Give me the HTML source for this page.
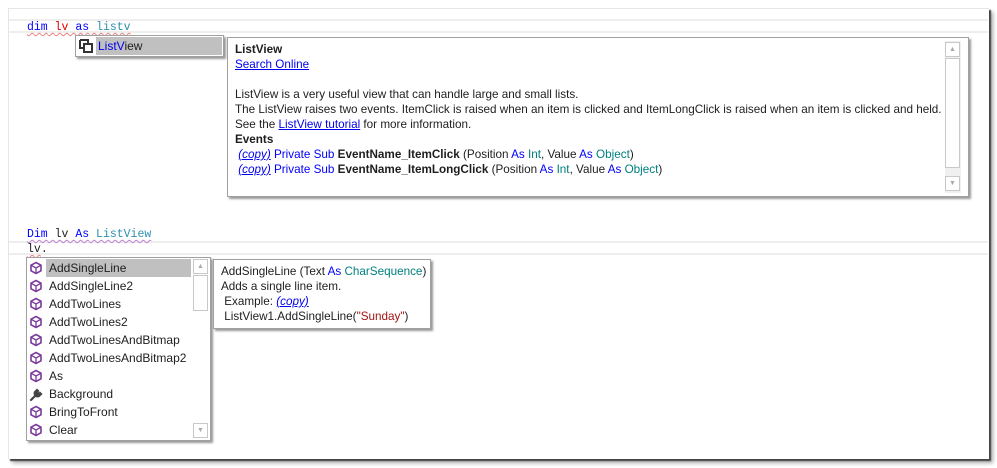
<!DOCTYPE html>
<html><head><meta charset="utf-8"><style>
*{margin:0;padding:0;box-sizing:border-box}
body{width:997px;height:468px;background:#fff;position:relative;overflow:hidden;font-family:"Segoe UI","Liberation Sans",sans-serif;font-size:11.7px;color:#1e1e1e}
.win{position:absolute;left:8px;top:8px;width:981px;height:451px;background:#fff;border-top:1px solid #e6e6e6;border-left:1px solid #e6e6e6;box-shadow:2px 2px 1px #444,4px 4px 4px #aaa}
.hl{position:absolute;left:9px;width:979px;height:14px;border-top:2px solid #eeeeee;border-bottom:2px solid #eeeeee}
.code{position:absolute;font-family:"Liberation Mono",monospace;font-size:11.5px;line-height:13px;white-space:pre}
.sq{text-decoration:underline wavy #f08080;text-decoration-thickness:1px;text-underline-offset:2px}
.sqp{text-decoration:underline wavy #c080d0;text-decoration-thickness:1px;text-underline-offset:2px}
.kw{color:#0000ff}.ty{color:#2b91af}.rd{color:#e00000}
.box{position:absolute;background:#fff;border:1px solid #a0a0a0;box-shadow:2px 2px 2px #999}
.t{position:absolute;white-space:nowrap;line-height:15px}
a{color:#0000ee;text-decoration:underline}
.b{color:#0000ff}.g{color:#008080}
.sb{position:absolute;border:1px solid #c8c8c8;background:#fff}
.arr{position:absolute;width:15px;height:15px;border:1px solid #c8c8c8;background:#fff;color:#aaa;font-size:7px;text-align:center;line-height:13px}
.item{position:absolute;left:20px;height:18px;line-height:18px;padding-left:2px;white-space:nowrap;font-size:12px}
</style></head><body>
<div class="win"></div>
<div class="hl" style="top:19px"></div>
<div class="code" style="left:27px;top:21px"><span class="sq"><span class="kw">dim</span> <span class="rd">lv</span> <span class="kw">as</span> <span class="ty">listv</span></span></div>

<div class="box" style="left:75px;top:35px;width:149px;height:22px">
<svg style="position:absolute;left:3px;top:3px" width="14" height="14" viewBox="0 0 14 14"><path d="M1 1h8v3M1 1v8h3" fill="none" stroke="#333" stroke-width="2"/><rect x="5" y="5" width="8" height="8" fill="none" stroke="#333" stroke-width="2"/></svg>
<div style="position:absolute;left:20px;top:1px;width:126px;height:18px;background:#c0c0c0;line-height:18px;padding-left:2px;font-size:12px"><span style="color:#0000ee">ListV</span>iew</div>
</div>

<div class="box" style="left:227px;top:37px;width:742px;height:160px">
<div class="t" style="left:7px;top:4px;font-weight:bold">ListView</div>
<div class="t" style="left:7px;top:19px"><a>Search Online</a></div>
<div class="t" style="left:7px;top:49px">ListView is a very useful view that can handle large and small lists.</div>
<div class="t" style="left:7px;top:64px">The ListView raises two events. ItemClick is raised when an item is clicked and ItemLongClick is raised when an item is clicked and held.</div>
<div class="t" style="left:7px;top:79px">See the <a>ListView tutorial</a> for more information.</div>
<div class="t" style="left:7px;top:94px;font-weight:bold">Events</div>
<div class="t" style="left:7px;top:109px">&nbsp;<a><i>(copy)</i></a> <span class="b">Private Sub</span> <b>EventName_ItemClick</b> (Position <span class="b">As</span> <span class="g">Int</span>, Value <span class="b">As</span> <span class="g">Object</span>)</div>
<div class="t" style="left:7px;top:124px">&nbsp;<a><i>(copy)</i></a> <span class="b">Private Sub</span> <b>EventName_ItemLongClick</b> (Position <span class="b">As</span> <span class="g">Int</span>, Value <span class="b">As</span> <span class="g">Object</span>)</div>
<div style="position:absolute;left:717px;top:3px;width:16px;height:152px;background:#f0f0f0"></div>
<div class="arr" style="left:717px;top:4px">▲</div>
<div class="sb" style="left:717px;top:20px;width:15px;height:110px"></div>
<div class="arr" style="left:717px;top:138px">▼</div>
</div>

<div class="hl" style="top:241px"></div>
<div class="code" style="left:27px;top:228px"><span class="sqp"><span class="kw">Dim</span> lv <span class="kw">As</span> <span class="ty">ListView</span></span></div>
<div class="code" style="left:27px;top:243px"><span class="sq">lv</span>.</div>

<div class="box" style="left:26px;top:257px;width:185px;height:184px">
<div style="position:absolute;left:19px;top:1px;width:145px;height:18px;background:#c0c0c0"></div>
<div class="item" style="top:1px">AddSingleLine</div>
<div class="item" style="top:19px">AddSingleLine2</div>
<div class="item" style="top:37px">AddTwoLines</div>
<div class="item" style="top:55px">AddTwoLines2</div>
<div class="item" style="top:73px">AddTwoLinesAndBitmap</div>
<div class="item" style="top:91px">AddTwoLinesAndBitmap2</div>
<div class="item" style="top:109px">As</div>
<div class="item" style="top:127px">Background</div>
<div class="item" style="top:145px">BringToFront</div>
<div class="item" style="top:163px">Clear</div>
<svg style="position:absolute;left:2px;top:0" width="14" height="182" viewBox="0 0 14 182">
<defs><g id="cu"><path d="M7 1.5L12 4.2v5.6L7 12.5L2 9.8V4.2z" fill="none" stroke="#7a3a9a" stroke-width="1.6"/><path d="M2 4.2L7 7l5-2.8M7 7v5.5" fill="none" stroke="#7a3a9a" stroke-width="1.3"/></g></defs>
<use href="#cu" y="3"/><use href="#cu" y="21"/><use href="#cu" y="39"/><use href="#cu" y="57"/><use href="#cu" y="75"/><use href="#cu" y="93"/><use href="#cu" y="111"/>
<path d="M2 142l5-5M6 134a3 3 0 0 0 4 4l2-2-1-1-1 1-2-2 1-1-1-1z" fill="#444" stroke="#444" stroke-width="2.2" stroke-linecap="round"/>
<use href="#cu" y="147"/><use href="#cu" y="165"/>
</svg>
<div class="arr" style="left:166px;top:1px">▲</div>
<div class="sb" style="left:166px;top:17px;width:15px;height:36px"></div>
<div class="arr" style="left:166px;top:165px">▼</div>
</div>

<div class="box" style="left:213px;top:259px;width:218px;height:70px">
<div class="t" style="left:7px;top:4px">AddSingleLine (Text <span class="b">As</span> <span class="g">CharSequence</span>)</div>
<div class="t" style="left:7px;top:19px">Adds a single line item.</div>
<div class="t" style="left:7px;top:34px">&nbsp;Example: <a><i>(copy)</i></a></div>
<div class="t" style="left:7px;top:49px">&nbsp;ListView1.AddSingleLine(<span style="color:#a31515">"Sunday"</span>)</div>
</div>
</body></html>
